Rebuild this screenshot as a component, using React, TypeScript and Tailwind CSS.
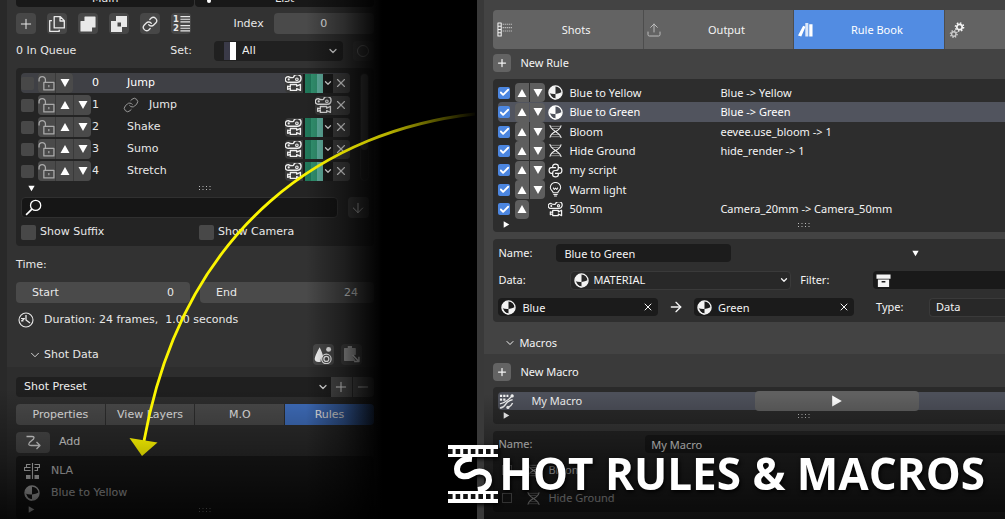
import type { ReactNode } from "react";
import clsx from "clsx";
import { ArrowDown, ArrowRight, Check, ChevronDown, Link, Minus, Plus, Upload, X } from "lucide-react";

interface IconProps {
    className?: string;
}

interface SvgProps extends IconProps {
    children: ReactNode;
}

function Svg({ className = "size-4", children }: SvgProps) {
    return (
        <svg
            viewBox="0 0 16 16"
            className={clsx("shrink-0", className)}
            fill="none"
            stroke="currentColor"
            strokeWidth="1.1"
            strokeLinejoin="round"
            aria-hidden="true"
        >
            {children}
        </svg>
    );
}

function MaterialIcon({ className }: IconProps) {
    return (
        <Svg className={className}>
            <circle cx="8" cy="8" r="7" strokeWidth="1.4" />
            <path d="M8 9.500V1A7 7 0 0 0 2 4.500Q.6 7 1.200 8.500Q4.500 9.800 8 9.500Z" fill="currentColor" stroke="none" />
            <path d="M8 9.500Q12 9.200 14.900 7.500A7 7 0 0 1 8 15Z" fill="currentColor" stroke="none" />
            <path d="M1.500 9Q3 14.500 8 15" strokeWidth="1.400" />
        </Svg>
    );
}

function CameraIcon({ className }: IconProps) {
    return (
        <Svg className={className}>
            <path d="M3.200 1.500a2.700 2.700 0 1 0 .4 5.300h7.600A3.600 3.600 0 1 0 8 2.300Q5.500 3 3.200 1.500Z" strokeWidth="1.300" />
            <circle cx="11.200" cy="4" r="1.200" />
            <circle cx="3.500" cy="4.200" r=".5" />
            <path d="M5 9h6v1.500l3.500-1.700v5.700L11 12.800v1.700H5V12.500L2.500 13.500v-3L5 11.200Z" strokeWidth="1.300" />
        </Svg>
    );
}

function DnaIcon({ className }: IconProps) {
    return (
        <Svg className={className}>
            <path d="M2 1C2 7 14 9 14 15M14 1.500C13 6 10 7 8 8S3 10.500 2 14.500" strokeWidth="1.100" />
            <path d="M2.500 2.500H13M4 4.800h7.500M4.500 11.200H12M3 13.500h10.500" strokeWidth=".5" />
        </Svg>
    );
}

function ScriptIcon({ className }: IconProps) {
    return (
        <Svg className={className}>
            <path
                d="M5 5V3.500Q5 1.200 8 1.200T11 3.500V5.500Q11 8 8.500 8H7.500Q5 8 5 10.500V11H3.500Q1.200 11 1.200 8T3.500 5H8.500M11 5h1.500Q14.800 5 14.800 8T12.500 11H7.500M11 11v1.500Q11 14.800 8 14.800T5 12.500V11"
                strokeWidth="1.300"
            />
        </Svg>
    );
}

function LightIcon({ className }: IconProps) {
    return (
        <Svg className={className}>
            <path d="M5.500 11.500C5.500 9.500 2.500 8.800 2.500 5.800A5.500 5.300 0 0 1 13.500 5.800C13.500 8.800 10.500 9.500 10.500 11.500Z" />
            <path d="M5.700 13.300h4.600M6.500 15h3M5.500 6l1.200 2L8 6.500 9.300 8l1.200-2" />
        </Svg>
    );
}

function DuplicateIcon({ className }: IconProps) {
    return (
        <Svg className={className}>
            <path d="M5.500 1.500h5.500l3.500 3.500v6.500h-9ZM10.700 1.500v3.800h3.800" strokeWidth="1.200" />
            <path d="M3.500 5H1.500v9.500h8.500v-1.500" strokeWidth="1.200" />
        </Svg>
    );
}

function ExtendIcon({ className }: IconProps) {
    return (
        <Svg className={className}>
            <path d="M5 1h10v10h-3.500v4H1V5.500h4Z" fill="currentColor" />
        </Svg>
    );
}

function DifferenceIcon({ className }: IconProps) {
    return (
        <Svg className={className}>
            <path
                d="M5 0h11v11h-5v5H0V5h5ZM6.500 6.500v4H10v-4Z"
                fill="currentColor"
                fillRule="evenodd"
                stroke="none"
            />
        </Svg>
    );
}

function LineNumbersIcon({ className }: IconProps) {
    return (
        <Svg className={className}>
            <text x="0" y="7" fontSize="8" fontWeight="700" fill="currentColor" stroke="none">
                1
            </text>
            <text x="0" y="15.500" fontSize="8" fontWeight="700" fill="currentColor" stroke="none">
                2
            </text>
            <path d="M7 1.500h9M7 4h9M7 6.500h9M7 10h9M7 12.500h9M7 15h9" />
        </Svg>
    );
}

function UnlockedIcon({ className }: IconProps) {
    return (
        <Svg className={className}>
            <path d="M1 6V4.500a3 3 0 0 1 6 0V7M5.500 7h9.500v7H5.500Z" strokeWidth="1.200" />
            <path d="M10.200 9.500v2" />
        </Svg>
    );
}

function SearchIcon({ className }: IconProps) {
    return (
        <Svg className={className}>
            <circle cx="10" cy="6" r="4.800" strokeWidth="1.200" />
            <path d="M6.500 9.500 1 15" strokeWidth="1.500" />
        </Svg>
    );
}

function ClockIcon({ className }: IconProps) {
    return (
        <Svg className={className}>
            <circle cx="8" cy="8" r="7" />
            <path d="M8 3v5l4 3" strokeWidth="1.300" />
            <path d="M3 6.500h3.500L3.500 9h2" />
        </Svg>
    );
}

function ShadingIcon({ className }: IconProps) {
    return (
        <Svg className={className}>
            <path d="M5 1Q8 7 8 9.500A4 4 0 0 0 6 14Q1 15 .6 11.500Q.6 9 5 1Z" fill="currentColor" stroke="none" />
            <circle cx="13" cy="3" r="2.200" fill="currentColor" stroke="none" />
            <circle cx="11" cy="11.500" r="4.200" />
            <circle cx="11" cy="11.500" r="2.200" />
        </Svg>
    );
}

function PasteIcon({ className }: IconProps) {
    return (
        <Svg className={className}>
            <path d="M1.500 2.500h10V8L8 9l3 4.500H1.500Z" fill="currentColor" opacity=".7" />
            <path d="M4.500 1h4M9 8.500l6 6M15 10v4.500h-4.500" strokeWidth="1.400" />
        </Svg>
    );
}

function AddArrowIcon({ className }: IconProps) {
    return (
        <Svg className={className}>
            <path d="M1.500 2.500H7Q10 2.500 8.500 5L4.500 8.500Q2.500 11.500 6 11.500H14.500M11.500 8l3.500 3.500-3.500 3.500" strokeWidth="1.300" />
        </Svg>
    );
}

function NlaIcon({ className }: IconProps) {
    return (
        <Svg className={className}>
            <path d="M8.500 0v16M6.500 1.500h-4v3H.5v3H6.500M6.500 4.500h-4M10.500 1.500h5v3h-5M10.500 7.500h3v-3" />
            <path d="M2 12h4.500v4H2ZM10.500 12H15v4h-4.500Z" fill="currentColor" stroke="none" />
        </Svg>
    );
}

function ShotsIcon({ className }: IconProps) {
    return (
        <Svg className={className}>
            <path d="M1 1h3.500v14H1ZM1 4.500h3.500M1 8h3.500M1 11.500h3.500" />
            <path d="M6 2.500h10M6 6h10M6 9.500h10" strokeDasharray="1.500 .7" opacity=".6" />
        </Svg>
    );
}

function BooksIcon({ className }: IconProps) {
    return (
        <Svg className={className}>
            <path d="M5.500 4 8 5 3.500 15.500 0 14.500ZM12 2.500h3.500v13H12Z" fill="currentColor" stroke="none" />
            <path d="M7.800 1H11V15.500H7.800Z" fill="currentColor" stroke="none" opacity=".8" />
        </Svg>
    );
}

function GearsIcon({ className }: IconProps) {
    return (
        <Svg className={className}>
            <circle cx="10.500" cy="5" r="2.700" strokeWidth="1.700" />
            <circle cx="10.500" cy="5" r="4.100" strokeDasharray="1.600 1.600" strokeWidth="1.500" />
            <circle cx="4.800" cy="12" r="2.200" strokeWidth="1.400" opacity=".7" />
            <circle cx="4.800" cy="12" r="3.400" strokeDasharray="1.300 1.360" strokeWidth="1.300" opacity=".7" />
        </Svg>
    );
}

function CollectionIcon({ className }: IconProps) {
    return (
        <Svg className={className}>
            <path d="M.5 1.500h15V6H.5ZM2 7h12v8H2ZM6 8.500v1.500h4v-1.500Z" fill="currentColor" fillRule="evenodd" stroke="none" />
        </Svg>
    );
}

function MacroIcon({ className }: IconProps) {
    return (
        <Svg className={className}>
            <path d="M1 10.500Q8 9 14.500 1.500M1 15Q5 14.500 7 11T14.500 6M9.500 14.500Q13 13 14.500 9.500" strokeWidth="1.500" />
            <path d="M1 2h9M1 6h7" strokeDasharray="2.400 1.100" strokeWidth="2.400" />
            <circle cx="14" cy="2" r="1.200" fill="currentColor" />
            <circle cx="9.500" cy="14.300" r="1.200" fill="currentColor" />
        </Svg>
    );
}

function Triangle({ dir, className }: { dir: "up" | "down" | "right"; className?: string }) {
    const points = {
        up: "5,1 9.500,9 .5,9",
        down: ".5,1 9.500,1 5,9",
        right: "1,.5 9,5 1,9.500",
    };
    return (
        <svg viewBox="0 0 10 10" className={clsx("shrink-0", className)} aria-hidden="true">
            <polygon points={points[dir]} fill="currentColor" />
        </svg>
    );
}

function Grip() {
    return (
        <svg viewBox="0 0 14 6" className="h-1.5 w-3.5" aria-hidden="true">
            <path d="M1 1.500h12M1 4.500h12" stroke="#bbb" strokeWidth="1" strokeDasharray="1 2.500" />
        </svg>
    );
}

// Bottom strip of a list: expander on the left, drag handle past the middle
function ListFooter({ dir, className }: { dir: "down" | "right"; className?: string }) {
    return (
        <div className={clsx("flex items-center text-white", className)}>
            <span className="flex flex-1">
                <button type="button" aria-label="Expand list">
                    <Triangle dir={dir} className="size-[7px]" />
                </button>
            </span>
            <Grip />
        </div>
    );
}

function IconButton({ label, className, children }: { label: string; className?: string; children: ReactNode }) {
    return (
        <button
            type="button"
            aria-label={label}
            className={clsx("flex shrink-0 items-center justify-center hover:brightness-125", className)}
        >
            {children}
        </button>
    );
}

function RuleCheckbox({ label }: { label: string }) {
    return (
        <span className="grid shrink-0 place-items-center">
            <input
                type="checkbox"
                aria-label={label}
                defaultChecked
                className="peer col-start-1 row-start-1 size-3 appearance-none rounded-xs bg-[#4a4a4a] checked:bg-[#4c86e0]"
            />
            <Check className="pointer-events-none invisible col-start-1 row-start-1 size-[11px] text-white peer-checked:visible" strokeWidth={4} />
        </span>
    );
}

const shots = [
    { index: 0, name: "Jump", up: false, linked: false, active: true },
    { index: 1, name: "Jump", up: true, linked: true, active: false },
    { index: 2, name: "Shake", up: true, linked: false, active: false },
    { index: 3, name: "Sumo", up: true, linked: false, active: false },
    { index: 4, name: "Stretch", up: true, linked: false, active: false },
];

const rules = [
    { name: "Blue to Yellow", value: "Blue -> Yellow", Icon: MaterialIcon },
    { name: "Blue to Green", value: "Blue -> Green", Icon: MaterialIcon },
    { name: "Bloom", value: "eevee.use_bloom -> 1", Icon: DnaIcon },
    { name: "Hide Ground", value: "hide_render -> 1", Icon: DnaIcon },
    { name: "my script", value: "", Icon: ScriptIcon },
    { name: "Warm light", value: "", Icon: LightIcon },
    { name: "50mm", value: "Camera_20mm -> Camera_50mm", Icon: CameraIcon },
];

const toolButton = "h-[21px] w-5 rounded bg-[#474747]";

function ShotRow({ shot }: { shot: (typeof shots)[number] }) {
    return (
        <li className={clsx("flex h-5 items-center rounded", shot.active && "bg-[#3f4045] text-white")}>
            <input
                type="checkbox"
                aria-label={`Queue shot ${shot.index}`}
                className="size-[13px] shrink-0 appearance-none rounded-xs bg-[#484848] checked:bg-[#4c86e0]"
            />
            <div className="ml-1 flex w-[54px] shrink-0">
                <div className="flex h-5 gap-px overflow-hidden rounded bg-[#3a3a3a]">
                    <IconButton label="Lock shot" className="w-[17px] bg-[#4a4a4a] text-[#aaa]">
                        <UnlockedIcon className="size-[17px]" />
                    </IconButton>
                    {shot.up && (
                        <IconButton label="Move up" className="w-[17px] bg-[#4a4a4a] text-white">
                            <Triangle dir="up" className="size-2.5" />
                        </IconButton>
                    )}
                    <IconButton label="Move down" className="w-[17px] bg-[#4a4a4a] text-white">
                        <Triangle dir="down" className="size-2.5" />
                    </IconButton>
                </div>
            </div>
            <span className="w-[31px] shrink-0">{shot.index}</span>
            <span className="flex flex-1 items-center gap-2.5 pl-1">
                {shot.linked && <Link className="-ml-1 size-4 text-[#999]" strokeWidth={1.5} />}
                {shot.name}
            </span>
            <div className="flex h-[19px] items-center overflow-hidden rounded bg-[#3a3a3a] text-[#eee]">
                <IconButton label="Shot camera" className="w-[18px]">
                    <CameraIcon className="size-[17px]" />
                </IconButton>
                {!shot.linked && (
                    <button type="button" aria-label="Shot color" className="flex h-full items-center bg-[#1c1c1c] pl-0.5">
                        <span className="h-full w-1.5 bg-[#21785a]" />
                        <span className="h-full w-1.5 bg-[#329270]" />
                        <span className="h-full w-1.5 bg-[#62b3a2]" />
                        <ChevronDown className="size-2.5" strokeWidth={3} />
                    </button>
                )}
                <IconButton label="Remove shot" className="h-full w-[17px] bg-[#404040]">
                    <X className="size-3.5" strokeWidth={2} />
                </IconButton>
            </div>
        </li>
    );
}

function ShotsPanel() {
    return (
        <section className="relative flex w-[38%] flex-col border-l-[7px] border-[#292929] bg-[#323232] font-['DejaVu_Sans',sans-serif] text-[11px] leading-4 text-[#e8e8e8]">
            <div className="flex flex-1 flex-col">
                <div className="flex flex-col pr-2 pl-[9px]">
                    <nav className="flex h-[7px] items-end gap-px overflow-hidden text-center">
                        <button type="button" className="h-5 flex-1 rounded-b bg-[#181818] pt-1">
                            Main
                        </button>
                        <button type="button" className="relative h-5 flex-1 rounded-b bg-[#181818] pt-1">
                            <span className="absolute bottom-1 left-3 size-1 rounded-full bg-white" />
                            List
                        </button>
                    </nav>

                    <div className="mt-1.5 flex h-[21px] items-center">
                        <div className="flex gap-[11px]">
                            <IconButton label="Add shot" className={toolButton}>
                                <Plus className="size-4" strokeWidth={1.5} />
                            </IconButton>
                            <IconButton label="Duplicate" className={toolButton}>
                                <DuplicateIcon className="size-[18px]" />
                            </IconButton>
                            <IconButton label="Extend" className={toolButton}>
                                <ExtendIcon />
                            </IconButton>
                            <IconButton label="Difference" className={toolButton}>
                                <DifferenceIcon />
                            </IconButton>
                            <IconButton label="Link" className={toolButton}>
                                <Link className="size-4" strokeWidth={2} />
                            </IconButton>
                            <IconButton label="Renumber" className={toolButton}>
                                <LineNumbersIcon className="size-[17px]" />
                            </IconButton>
                        </div>
                        <label htmlFor="shot-index" className="mr-2.5 ml-auto">
                            Index
                        </label>
                        <input id="shot-index" defaultValue="0" className="h-[21px] w-[28%] rounded bg-[#4a4a4a] text-center" />
                    </div>

                    <div className="mt-[7px] flex h-5 items-center">
                        <span>0 In Queue</span>
                        <label htmlFor="shot-set" className="mr-[22px] ml-auto">
                            Set:
                        </label>
                        <span className="relative flex w-[36%] items-center">
                            <select id="shot-set" className="h-5 w-full appearance-none rounded bg-[#202020] pl-7 text-[#eee]">
                                <option>All</option>
                            </select>
                            <span className="pointer-events-none absolute left-2.5 flex h-[18px]">
                                <span className="w-1.5 bg-[#3a3a48]" />
                                <span className="w-1.5 bg-white" />
                            </span>
                            <ChevronDown className="pointer-events-none absolute right-1 size-3" strokeWidth={2.5} />
                        </span>
                        <IconButton label="Record" className="ml-2.5 h-5 w-[21px] rounded bg-[#3a3a3a]">
                            <span className="size-3 rounded-full border border-[#777]" />
                        </IconButton>
                    </div>

                    <div className="mt-[7px] rounded bg-[#242424] px-[5px]">
                        <div className="flex pt-[5px]">
                            <ul className="flex flex-1 flex-col gap-0.5">
                                {shots.map((shot) => (
                                    <ShotRow key={shot.index} shot={shot} />
                                ))}
                            </ul>
                            <div className="ml-2.5 w-[9px] rounded-full border border-[#303030]">
                                <div className="h-[72%] rounded-full bg-[#484848]" />
                            </div>
                        </div>
                        <ListFooter dir="down" className="h-[14px] w-[55%] pl-[7px]" />
                        <div className="mt-0.5 flex h-[21px] items-center gap-2.5">
                            <span className="relative flex flex-1 items-center">
                                <SearchIcon className="pointer-events-none absolute left-1 size-[17px] text-white" />
                                <input aria-label="Search shots" className="h-[21px] w-full rounded border border-[#303030] bg-[#161616] pl-7" />
                            </span>
                            <IconButton label="Sort" className="h-[21px] w-[21px] rounded bg-[#3a3a3a] text-[#ccc]">
                                <ArrowDown className="size-4" strokeWidth={1.5} />
                            </IconButton>
                        </div>
                        <div className="flex h-7 items-center">
                            <label className="flex w-1/2 items-center gap-1">
                                <input type="checkbox" className="size-[15px] appearance-none rounded-xs bg-[#484848] checked:bg-[#4c86e0]" />
                                Show Suffix
                            </label>
                            <label className="flex items-center gap-1 pl-1">
                                <input type="checkbox" className="size-[15px] appearance-none rounded-xs bg-[#484848] checked:bg-[#4c86e0]" />
                                Show Camera
                            </label>
                        </div>
                    </div>

                    <div className="flex h-9 items-center pt-0.5">Time:</div>
                    <div className="flex gap-2.5">
                        <div className="flex h-[21px] min-w-0 flex-1 items-center rounded bg-[#4a4a4a] px-4">
                            <label htmlFor="start">Start</label>
                            <input id="start" defaultValue="0" className="w-full min-w-0 text-right" />
                        </div>
                        <div className="flex h-[21px] min-w-0 flex-1 items-center rounded bg-[#4a4a4a] px-4">
                            <label htmlFor="end">End</label>
                            <input id="end" defaultValue="24" className="w-full min-w-0 text-right" />
                        </div>
                    </div>
                    <div className="flex h-[33px] items-center gap-2.5 pl-0.5 whitespace-pre">
                        <ClockIcon className="size-4" />
                        {"Duration: 24 frames,  1.00 seconds"}
                    </div>
                    <div className="mt-2 flex h-[23px] items-start">
                        <button type="button" className="flex h-[21px] items-center gap-0.5 pl-3">
                            <ChevronDown className="size-3.5" strokeWidth={1.5} />
                            Shot Data
                        </button>
                        <IconButton label="Shading" className="ml-auto h-[21px] w-[21px] rounded bg-[#4c4c4c] text-white">
                            <ShadingIcon className="size-[18px]" />
                        </IconButton>
                        <IconButton label="Paste data" className="mr-3 ml-[7px] h-[21px] w-[21px] rounded bg-[#424242] text-[#ccc]">
                            <PasteIcon className="size-[17px]" />
                        </IconButton>
                    </div>
                </div>

                <div className="flex flex-1 flex-col bg-[#2d2d2d] pt-2.5 pr-2 pl-[9px]">
                    <div className="flex h-5 overflow-hidden rounded">
                        <span className="relative flex flex-1 items-center">
                            <select aria-label="Shot preset" className="h-5 w-full appearance-none bg-[#1f1f1f] pl-2 text-[#eee]">
                                <option>Shot Preset</option>
                            </select>
                            <ChevronDown className="pointer-events-none absolute right-0.5 size-3" strokeWidth={2.5} />
                        </span>
                        <IconButton label="Add preset" className="w-[21px] bg-[#4c4c4c]">
                            <Plus className="size-4" strokeWidth={1.5} />
                        </IconButton>
                        <IconButton label="Remove preset" className="ml-px w-[21px] bg-[#4c4c4c]">
                            <Minus className="size-4" strokeWidth={1.5} />
                        </IconButton>
                    </div>
                    <nav className="mt-[7px] grid h-[21px] grid-cols-4 gap-px overflow-hidden rounded">
                        {["Properties", "View Layers", "M.O", "Rules"].map((tab) => (
                            <button key={tab} type="button" className={tab === "Rules" ? "bg-[#3f6ebd] text-white" : "bg-[#4a4a4a]"}>
                                {tab}
                            </button>
                        ))}
                    </nav>
                    <div className="mt-1.5 flex h-[22px] items-center gap-[9px]">
                        <IconButton label="Add rule to shot" className="h-[21px] w-[34px] rounded bg-[#4c4c4c]">
                            <AddArrowIcon />
                        </IconButton>
                        Add
                    </div>
                    <div className="mt-[3px] flex-1 rounded bg-[#1b1b1b] px-[5px] pt-1">
                        <ul>
                            <li className="flex h-[22px] items-center gap-[11px] pl-[3px]">
                                <NlaIcon />
                                NLA
                            </li>
                            <li className="flex h-[22px] items-center gap-[11px] pl-[3px]">
                                <MaterialIcon />
                                Blue to Yellow
                            </li>
                        </ul>
                        <ListFooter dir="right" className="h-[11px] w-[55%] pl-[7px]" />
                    </div>
                </div>
            </div>
            <div className="pointer-events-none absolute inset-y-0 right-0 w-[76px] bg-linear-to-r from-transparent via-black/40 to-black" />
            <div className="pointer-events-none absolute inset-x-0 -left-[7px] bottom-0 h-[25%] bg-linear-to-b from-transparent via-black/35 to-black/80" />
        </section>
    );
}

function RuleBookPanel() {
    return (
        <section className="relative flex w-[52.5%] flex-col overflow-hidden border-l-[7px] border-[#393939] bg-[#434343] text-[11px] leading-4 text-[#f4f4f4]">
            <div className="flex flex-col pt-2.5 pl-[9px]">
                <nav className="flex h-[39px] gap-px overflow-hidden rounded-l bg-[#4d4d4d]">
                    <button type="button" className="relative w-[29.2%] bg-[#636363] pl-4">
                        <ShotsIcon className="absolute top-3 left-1 size-[15px]" />
                        Shots
                    </button>
                    <button type="button" className="relative w-[29.2%] bg-[#636363] pl-4">
                        <Upload className="absolute top-3 left-0.5 size-4 text-[#bbb]" strokeWidth={1.5} />
                        Output
                    </button>
                    <button type="button" className="relative w-[29.2%] bg-[#528ce2] pl-4 text-white">
                        <BooksIcon className="absolute top-3 left-1 size-[15px]" />
                        Rule Book
                    </button>
                    <button type="button" aria-label="Settings" className="flex flex-1 items-center bg-[#636363] pl-1">
                        <GearsIcon />
                    </button>
                </nav>
                <div className="mt-[5px] flex h-[18px] items-center gap-[9px]">
                    <IconButton label="New rule" className="size-[18px] rounded bg-[#636363]">
                        <Plus className="size-3" strokeWidth={2.5} />
                    </IconButton>
                    New Rule
                </div>

                <div className="mt-[7px] rounded-l bg-[#2d2d2d] pt-1 pb-0.5">
                    <ul className="grid h-[136px] auto-rows-fr pl-[5px]">
                        {rules.map(({ name, value, Icon }, i) => (
                            <li key={name} className={clsx("flex items-center rounded-l", i === 1 && "bg-[#51545e] text-white")}>
                                <RuleCheckbox label={`Enable ${name}`} />
                                <div className="ml-[5px] flex w-[33px] shrink-0">
                                    <div className="flex h-[19px] gap-px overflow-hidden rounded">
                                        <IconButton label="Move up" className="w-[14px] bg-[#5e5e5e] text-white">
                                            <Triangle dir="up" className="size-2.5" />
                                        </IconButton>
                                        {i < rules.length - 1 && (
                                            <IconButton label="Move down" className="w-[15px] bg-[#5e5e5e] text-white">
                                                <Triangle dir="down" className="size-2.5" />
                                            </IconButton>
                                        )}
                                    </div>
                                </div>
                                <Icon className="size-[15px]" />
                                <span className="w-[31%] pl-1.5">{name}</span>
                                <span>{value}</span>
                            </li>
                        ))}
                    </ul>
                    <ListFooter dir="right" className="h-[11px] w-[62%] pl-2.5" />
                </div>

                <div className="mt-[7px] flex flex-col gap-[9px] rounded-l bg-[#2f2f2f] pt-[5px] pb-1.5 pl-[5px]">
                    <div className="flex h-[18px] items-center">
                        <label htmlFor="rule-name" className="w-[58px]">
                            Name:
                        </label>
                        <input id="rule-name" defaultValue="Blue to Green" className="h-[18px] w-[34.5%] rounded bg-[#1c1c1c] px-2" />
                        <button type="button" aria-label="More options" className="mr-[86px] ml-auto text-white">
                            <Triangle dir="down" className="size-[7px]" />
                        </button>
                    </div>
                    <div className="flex h-[18px] items-center">
                        <label htmlFor="rule-data" className="w-[72px]">
                            Data:
                        </label>
                        <span className="relative flex flex-1 items-center">
                            <MaterialIcon className="pointer-events-none absolute left-1 size-[15px]" />
                            <select id="rule-data" className="h-[19px] w-full appearance-none rounded border border-[#3a3a3a] bg-[#282828] pl-[22px]">
                                <option>MATERIAL</option>
                            </select>
                            <ChevronDown className="pointer-events-none absolute right-0.5 size-2.5" strokeWidth={3} />
                        </span>
                        <label htmlFor="rule-filter" className="w-[82px] pl-[9px]">
                            Filter:
                        </label>
                        <span className="relative flex w-[26%] items-center">
                            <CollectionIcon className="pointer-events-none absolute left-[3px] size-[15px]" />
                            <input id="rule-filter" className="h-[18px] w-full rounded-l bg-[#191919] pl-6" />
                        </span>
                    </div>
                    <div className="flex h-[18px] items-center">
                        <span className="relative flex w-[31.5%] items-center">
                            <MaterialIcon className="pointer-events-none absolute left-[3px] size-[15px]" />
                            <input aria-label="From material" defaultValue="Blue" className="h-[18px] w-full rounded bg-[#1b1b1b] pl-6" />
                            <X className="absolute right-1 size-3" strokeWidth={2} />
                        </span>
                        <ArrowRight className="mx-2.5 size-4" strokeWidth={2} />
                        <span className="relative flex w-[31.5%] items-center">
                            <MaterialIcon className="pointer-events-none absolute left-[3px] size-[15px]" />
                            <input aria-label="To material" defaultValue="Green" className="h-[18px] w-full rounded bg-[#1b1b1b] pl-6" />
                            <X className="absolute right-1 size-3" strokeWidth={2} />
                        </span>
                        <label htmlFor="rule-type" className="ml-auto w-[53px]">
                            Type:
                        </label>
                        <select id="rule-type" className="h-[19px] w-[15%] appearance-none rounded-l border border-r-0 border-[#3a3a3a] bg-[#282828] pl-1.5">
                            <option>Data</option>
                        </select>
                    </div>
                </div>
                <button type="button" className="mt-2.5 flex h-[22px] items-center gap-[3px] pl-[11px]">
                    <ChevronDown className="size-3" strokeWidth={2} />
                    Macros
                </button>
            </div>

            <div className="flex flex-1 flex-col bg-[#3a3a3a] pt-[9px] pl-[9px]">
                <div className="flex h-[18px] items-center gap-[9px]">
                    <IconButton label="New macro" className="size-[18px] rounded bg-[#636363]">
                        <Plus className="size-3" strokeWidth={2.5} />
                    </IconButton>
                    New Macro
                </div>
                <div className="mt-1.5 rounded-l bg-[#2a2a2a] pt-[5px] pb-[3px]">
                    <div className="ml-[5px] flex h-[18px] items-center rounded-l bg-[#4d505a] pl-px">
                        <MacroIcon className="size-[15px]" />
                        <span className="flex-1 pl-[17px]">My Macro</span>
                        <IconButton label="Run macro" className="mr-[17%] h-5 w-[32.5%] rounded bg-[#606060] text-white">
                            <Triangle dir="right" className="size-3" />
                        </IconButton>
                    </div>
                    <ListFooter dir="right" className="h-[11px] w-[62%] pl-2.5" />
                </div>
                <div className="mt-[7px] rounded-l bg-[#272727] pt-1 pl-[5px]">
                    <div className="flex h-[18px] items-center">
                        <label htmlFor="macro-name" className="w-[29%]">
                            Name:
                        </label>
                        <input id="macro-name" defaultValue="My Macro" className="h-[18px] flex-1 rounded-l bg-[#1a1a1a] px-1.5" />
                    </div>
                    <ul className="mt-[3px]">
                        {["Bloom", "Hide Ground"].map((step) => (
                            <li key={step}>
                                <label className="flex h-7 items-center pl-1">
                                    <input type="checkbox" className="size-2.5 appearance-none border border-[#999] checked:bg-[#4c86e0]" />
                                    <DnaIcon className="mr-[7px] ml-3.5 size-[15px]" />
                                    {step}
                                </label>
                            </li>
                        ))}
                    </ul>
                </div>
            </div>
            <div className="pointer-events-none absolute inset-x-0 -left-[7px] bottom-0 h-[24%] bg-linear-to-b from-transparent via-black/45 to-black/75" />
        </section>
    );
}

function CurvedArrow() {
    return (
        <svg width="490" height="470" className="pointer-events-none absolute top-0 left-0" aria-hidden="true">
            <defs>
                <linearGradient id="arrow-fade" gradientUnits="userSpaceOnUse" x1="300" y1="0" x2="478" y2="0">
                    <stop offset="0" stopColor="#fbf500" />
                    <stop offset=".5" stopColor="#b5b000" />
                    <stop offset="1" stopColor="#b5b000" stopOpacity="0" />
                </linearGradient>
                <linearGradient id="arrow-head" x1="0" y1="0" x2="0" y2="1">
                    <stop offset="0" stopColor="#dcd600" />
                    <stop offset="1" stopColor="#bdb800" />
                </linearGradient>
            </defs>
            <path d="M475 114C330 130 184 222 144 441" fill="none" stroke="url(#arrow-fade)" strokeWidth="2.8" />
            <path d="M129.500 438 157.500 442.500 142 456Z" fill="url(#arrow-head)" />
        </svg>
    );
}

function FilmS() {
    const holes = [0, 7.6, 15.2, 22.8, 30.4, 38, 45.6];
    return (
        <svg width="51" height="58" viewBox="0 0 51 58" role="img" aria-label="S" className="shrink-0">
            <rect x="0" y="0" width="50" height="12" fill="#fff" />
            <rect x="0" y="46" width="50" height="12" fill="#fff" />
            {holes.map((x) => (
                <g key={x} fill="#111">
                    <rect x={x} y="4" width="4.600" height="5" />
                    <rect x={x} y="49" width="4.600" height="5" />
                </g>
            ))}
            <path
                d="M24 14C15 13 9 18 9 24C9 32 18 33 24 29C31 24 41 27 41 35C41 40 37 44 30 45"
                fill="none"
                stroke="#fff"
                strokeWidth="6"
            />
        </svg>
    );
}

export default function App() {
    return (
        <main className="relative flex min-h-screen justify-between overflow-hidden bg-black font-['Noto_Sans',sans-serif]">
            <ShotsPanel />
            <RuleBookPanel />
            <CurvedArrow />
            <div className="absolute right-5 bottom-4 flex items-center drop-shadow-[1px_2px_2px_#000]">
                <FilmS />
                <h1 className="pb-0.5 font-['Open_Sans',sans-serif] text-[44px] leading-none font-bold whitespace-nowrap text-white">
                    HOT RULES &amp; MACROS
                </h1>
            </div>
        </main>
    );
}
